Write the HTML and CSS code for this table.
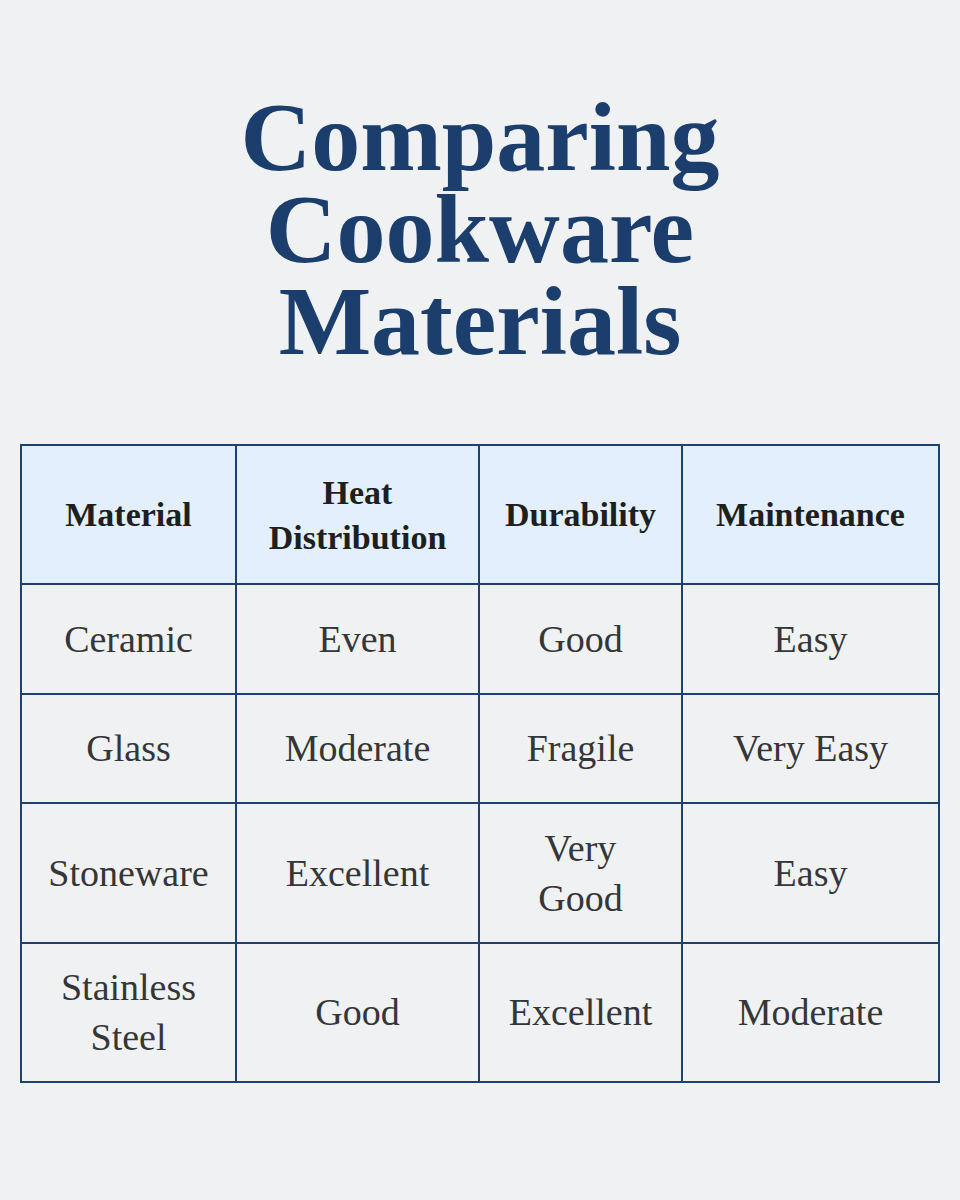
FILE: index.html
```html
<!DOCTYPE html>
<html lang="en">
<head>
<meta charset="utf-8">
<title>Comparing Cookware Materials</title>
<link rel="stylesheet" href="styles.css">
</head>
<body>
<main class="page">
  <h1 class="title">Comparing<br>Cookware<br>Materials</h1>
  <table class="compare">
    <colgroup>
      <col class="c1"><col class="c2"><col class="c3"><col class="c4">
    </colgroup>
    <thead>
      <tr class="row-head">
        <th>Material</th>
        <th>Heat Distribution</th>
        <th>Durability</th>
        <th>Maintenance</th>
      </tr>
    </thead>
    <tbody>
      <tr class="row-single">
        <td>Ceramic</td><td>Even</td><td>Good</td><td>Easy</td>
      </tr>
      <tr class="row-single">
        <td>Glass</td><td>Moderate</td><td>Fragile</td><td>Very Easy</td>
      </tr>
      <tr class="row-double">
        <td>Stoneware</td><td>Excellent</td><td>Very Good</td><td>Easy</td>
      </tr>
      <tr class="row-double">
        <td>Stainless Steel</td><td>Good</td><td>Excellent</td><td>Moderate</td>
      </tr>
    </tbody>
  </table>
</main>
</body>
</html>
```

FILE: styles.css
```css
html, body {
  margin: 0;
  padding: 0;
  background: #eff1f3;
}

.page {
  width: 960px;
  height: 1200px;
  box-sizing: border-box;
  padding: 91px 21px 0 21px;
  display: flex;
  flex-direction: column;
  align-items: center;
}

.title {
  margin: 0;
  font-family: "Liberation Serif", "Times New Roman", serif;
  font-weight: 700;
  font-size: 98px;
  line-height: 92px;
  color: #1b3e6d;
  text-align: center;
}

.compare {
  margin-top: 77px;
  width: 918px;
  table-layout: fixed;
  border-collapse: collapse;
  font-family: "Liberation Serif", "Times New Roman", serif;
}

.c1 { width: 215px; }
.c2 { width: 243px; }
.c3 { width: 203px; }
.c4 { width: 257px; }

.compare th,
.compare td {
  border: 2px solid #1e4172;
  text-align: center;
  vertical-align: middle;
  padding: 0 24px;
}

.compare th {
  background: #e3effd;
  color: #1d1f21;
  font-weight: 700;
  font-size: 34px;
  line-height: 45px;
}

.compare td {
  color: #353638;
  font-weight: 400;
  font-size: 38px;
  line-height: 50px;
}

.row-head { height: 139px; }
.row-single { height: 109.5px; }
.row-double { height: 139.5px; }
```
